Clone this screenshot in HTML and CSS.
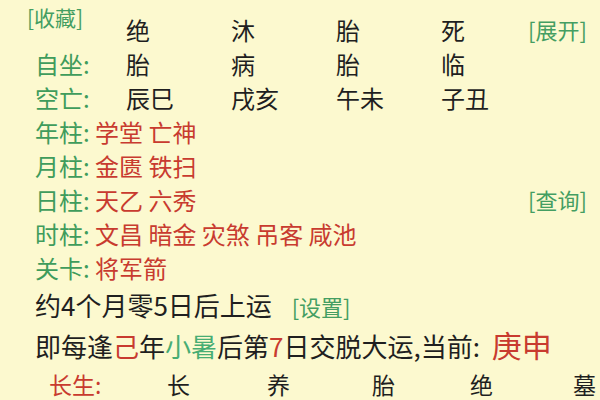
FILE: index.html
```html
<!DOCTYPE html>
<html lang="zh">
<head>
<meta charset="utf-8">
<link rel="stylesheet" href="styles.css">
</head>
<body>
<div class="page">
  <div class="grid">
    <div class="lab"><span class="link fav">[收藏]</span></div>
    <div class="v">绝</div><div class="v">沐</div><div class="v">胎</div><div class="v">死</div>
    <div class="link side">[展开]</div>

    <div class="lab">自坐:</div>
    <div class="v">胎</div><div class="v">病</div><div class="v">胎</div><div class="v">临</div>
    <div></div>

    <div class="lab">空亡:</div>
    <div class="v">辰巳</div><div class="v">戌亥</div><div class="v">午未</div><div class="v">子丑</div>
    <div></div>

    <div class="full"><span class="lab">年柱:</span> <span class="red">学堂 亡神</span></div>
    <div></div>

    <div class="full"><span class="lab">月柱:</span> <span class="red">金匮 铁扫</span></div>
    <div></div>

    <div class="full"><span class="lab">日柱:</span> <span class="red">天乙 六秀</span></div>
    <div class="link side">[查询]</div>

    <div class="full"><span class="lab">时柱:</span> <span class="red">文昌 暗金 灾煞 吊客 咸池</span></div>
    <div></div>

    <div class="full"><span class="lab">关卡:</span> <span class="red">将军箭</span></div>
    <div></div>
  </div>

  <div class="line1">约4个月零5日后上运 <span class="link set">[设置]</span></div>
  <div class="line2">即每逢<span class="red">己</span>年<span class="lgreen">小暑</span>后第<span class="red">7</span>日交脱大运,当前: <span class="red big">庚申</span></div>

  <div class="life">
    <div class="red">长生:</div>
    <div>长</div><div>养</div><div>胎</div><div>绝</div><div>墓</div>
  </div>
</div>
</body>
</html>
```

FILE: styles.css
```css
html, body {
  margin: 0;
  padding: 0;
  background: #fcf9cf;
}
body {
  font-family: "Noto Sans CJK SC", "Noto Sans", sans-serif;
  color: #1f1f1f;
  width: 600px;
  height: 400px;
  overflow: hidden;
}
.page {
  padding: 13px 0 0 35px;
}
.grid {
  display: grid;
  grid-template-columns: 91px 105px 105px 105px 88px auto;
  grid-auto-rows: 34px;
  font-size: 24px;
  line-height: 34px;
}
.lab {
  color: #3f9c5c;
  white-space: nowrap;
}
.full {
  grid-column: 1 / 6;
  white-space: nowrap;
}
.red { color: #c83b2f; }
.lgreen { color: #47ad73; }
.link {
  color: #449e62;
  font-size: 21px;
}
.fav {
  display: inline-block;
  margin-left: -8px;
  transform: translateY(-7px);
  line-height: 22px;
  vertical-align: top;
  position: relative;
}
.side {
  font-size: 22px;
  margin-top: -1px;
  margin-left: -1px;
  white-space: nowrap;
}
.line1 {
  margin-top: 3px;
  font-size: 26px;
  line-height: 34px;
  white-space: nowrap;
}
.set {
  font-size: 22px;
  margin-left: 14px;
}
.line2 {
  font-size: 26px;
  line-height: 42px;
  white-space: nowrap;
}
.big {
  font-size: 30px;
  margin-left: 6px;
}
.life {
  display: grid;
  grid-template-columns: 118px 100px 105px 98px 103px auto;
  padding-left: 14px;
  font-size: 23px;
  line-height: 34px;
}
```
